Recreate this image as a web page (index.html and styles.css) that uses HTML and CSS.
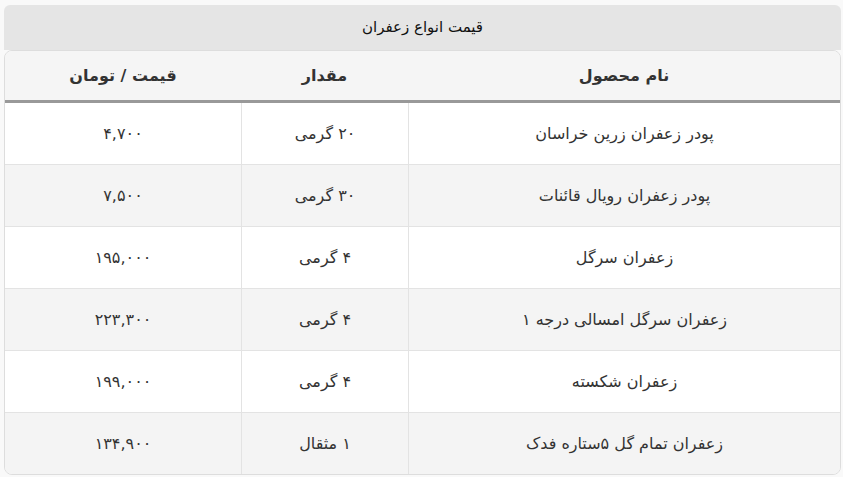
FILE: index.html
```html
<!DOCTYPE html>
<html lang="fa" dir="rtl">
<head>
<meta charset="utf-8">
<link rel="stylesheet" href="styles.css">
</head>
<body>
<div class="wrap">
  <div class="caption">قیمت انواع زعفران</div>
  <table class="prices">
    <thead>
      <tr><th class="c-name">نام محصول</th><th class="c-amt">مقدار</th><th class="c-price">قیمت / تومان</th></tr>
    </thead>
    <tbody>
      <tr><td>پودر زعفران زرین خراسان</td><td>۲۰ گرمی</td><td>۴,۷۰۰</td></tr>
      <tr><td>پودر زعفران رویال قائنات</td><td>۳۰ گرمی</td><td>۷,۵۰۰</td></tr>
      <tr><td>زعفران سرگل</td><td>۴ گرمی</td><td>۱۹۵,۰۰۰</td></tr>
      <tr><td>زعفران سرگل امسالی درجه ۱</td><td>۴ گرمی</td><td>۲۲۳,۳۰۰</td></tr>
      <tr><td>زعفران شکسته</td><td>۴ گرمی</td><td>۱۹۹,۰۰۰</td></tr>
      <tr><td>زعفران تمام گل ۵ستاره فدک</td><td>۱ مثقال</td><td>۱۳۴,۹۰۰</td></tr>
    </tbody>
  </table>
</div>
</body>
</html>
```
FILE: styles.css
```css
html, body {
  margin: 0;
  background: #f9f9f9;
}
body {
  padding: 5px 2px 0 4px;
  font-family: "DejaVu Sans", "Noto Sans", sans-serif;
  color: #333;
}
.wrap {
  width: 837px;
}
.caption {
  height: 45px;
  line-height: 45px;
  background: #e5e5e5;
  border-radius: 6px 6px 0 0;
  text-align: center;
  font-size: 15px;
  font-weight: normal;
  color: #111;
}
.prices {
  width: 837px;
  border-collapse: separate;
  border-spacing: 0;
  border: 1px solid #dddddd;
  border-radius: 8px;
  overflow: hidden;
  table-layout: fixed;
}
.prices th {
  height: 49px;
  background: #f5f5f5;
  font-weight: bold;
  font-size: 16px;
  color: #333;
  border-bottom: 3px solid #999;
  text-align: center;
  padding: 0;
}
.c-name { width: 432px; }
.c-amt { width: 167px; }
.c-price { width: auto; }
.prices td {
  height: 61px;
  padding: 0;
  text-align: center;
  font-size: 16px;
  color: #333;
  border-bottom: 1px solid #e3e3e3;
  border-left: 1px solid #e3e3e3;
  background: #fff;
}
.prices td:last-child { border-left: none; }
.prices tbody tr:last-child td { border-bottom: none; }
.prices tbody tr:nth-child(even) td { background: #f4f4f4; }
```
